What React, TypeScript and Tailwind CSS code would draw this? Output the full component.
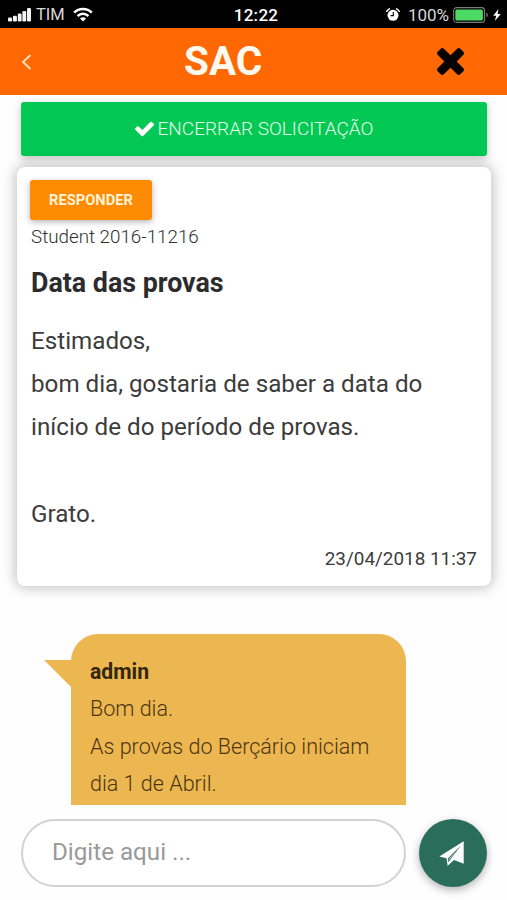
import type { ReactNode } from "react";

interface MessageLineProps {
  children?: ReactNode;
}

function SignalIcon() {
  return (
    <svg width="23" height="14" viewBox="0 0 23 14" fill="#f4f4f4">
      <rect x="0" y="9.5" width="4" height="4" rx="1.2" />
      <rect x="4.9" y="7.8" width="4" height="5.7" rx="1.2" />
      <rect x="9.8" y="5.5" width="3.8" height="8" rx="1.2" />
      <rect x="14.4" y="3" width="3.8" height="10.5" rx="1.2" />
      <rect x="19" y="0" width="4" height="13.5" rx="1.2" />
    </svg>
  );
}

function WifiIcon() {
  return (
    <svg width="20" height="15" viewBox="0 0 20 15" fill="none" stroke="#fff" strokeWidth="2.5">
      <path d="M1.2 5.6a12.4 12.4 0 0 1 17.6 0" />
      <path d="M4.6 9.1a7.6 7.6 0 0 1 10.8 0" />
      <path d="M10 14.4 7 11.4a4.2 4.2 0 0 1 6 0z" fill="#fff" stroke="none" />
    </svg>
  );
}

function AlarmIcon() {
  return (
    <svg width="14" height="14" viewBox="0 0 14 14">
      <circle cx="7" cy="7.3" r="5.5" fill="#fff" />
      <path d="M.7 3.3A8 8 0 0 1 3.4.8M10.6.8a8 8 0 0 1 2.7 2.5" fill="none" stroke="#fff" strokeWidth="1.5" strokeLinecap="round" />
      <path d="M7.3 4v3.6H4.6" fill="none" stroke="#000" strokeWidth="1.1" />
    </svg>
  );
}

function BatteryIcon() {
  return (
    <svg width="36" height="16" viewBox="0 0 36 16">
      <rect x=".6" y=".6" width="31" height="14.8" rx="3.2" fill="none" stroke="#7c7c7c" strokeWidth="1.1" />
      <rect x="2.3" y="2.4" width="27.6" height="11.2" rx="1.6" fill="#4cd964" />
      <path d="M33.4 5.6c1.9.8 1.9 4 0 4.8z" fill="#7c7c7c" />
    </svg>
  );
}

function StatusBar() {
  return (
    <div className="flex h-7 shrink-0 items-center bg-black pt-px text-[17px] leading-7 text-[#d8d8d8]">
      <div className="flex w-[170px] items-center pl-2">
        <SignalIcon />
        <span className="ml-[5px] text-[16.5px]">TIM</span>
        <span className="ml-2">
          <WifiIcon />
        </span>
      </div>
      <span className="flex-1 pl-[5px] text-center font-medium tracking-[0.3px] text-white">12:22</span>
      <div className="flex w-[170px] items-center justify-end pr-[6px]">
        <AlarmIcon />
        <span className="mr-1 ml-2">100%</span>
        <BatteryIcon />
        <svg className="ml-1" width="8" height="12" viewBox="0 0 8 12" fill="#fff">
          <path d="M5.5 0 .2 6.7h3L1.8 12 7.8 4.9H4.5z" />
        </svg>
      </div>
    </div>
  );
}

function Header() {
  return (
    <header className="flex h-[67px] shrink-0 items-center bg-[#ff6802] pr-[43px] pl-[21px]">
      <button className="w-[38px]" aria-label="Voltar">
        <svg width="11" height="16" viewBox="0 0 11 16" fill="none" stroke="#ffe3c0" strokeWidth="1.8">
          <path d="M9.5 1 2 8l7.5 7" />
        </svg>
      </button>
      <h1 className="ml-[125px] text-[40.5px] leading-[67px] font-bold text-[#fffaf0]">SAC</h1>
      <button className="ml-auto" aria-label="Fechar">
        <svg width="27" height="27" viewBox="302 366 1188 1188" fill="#080400">
          <path d="M1490 1322q0 40-28 68l-136 136q-28 28-68 28t-68-28l-294-294-294 294q-28 28-68 28t-68-28l-136-136q-28-28-28-68t28-68l294-294-294-294q-28-28-28-68t28-68l136-136q28-28 68-28t68 28l294 294 294-294q28-28 68-28t68 28l136 136q28 28 28 68t-28 68l-294 294 294 294q28 28 28 68z" />
        </svg>
      </button>
    </header>
  );
}

function MessageLine({ children }: MessageLineProps) {
  return <p className="h-[43.2px]">{children}</p>;
}

function RequestCard() {
  return (
    <section className="mx-4 mt-[11px] ml-[17px] h-[419px] shrink-0 rounded-lg bg-white px-3.5 pt-[13px] shadow-[0_0_13px_2px_rgba(0,0,0,0.24)]">
      <button className="-ml-px block h-10 w-[122px] rounded-[3px] bg-[#ff8a04] text-[14.7px] font-bold text-[#fff3d6] shadow-[0_2px_6px_rgba(0,0,0,0.3)]">
        RESPONDER
      </button>
      <p className="mt-1 text-[18.8px] leading-[26px] font-light text-[#303030]">Student 2016-11216</p>
      <h2 className="mt-[17px] text-[26.8px] leading-[33px] font-bold text-[#2c2c2c]">Data das provas</h2>
      <div className="mt-5 text-[24.2px] leading-[43.2px] text-[#3c3c3c]">
        <MessageLine>Estimados,</MessageLine>
        <MessageLine>bom dia, gostaria de saber a data do</MessageLine>
        <MessageLine>início de do período de provas.</MessageLine>
        <MessageLine />
        <MessageLine>Grato.</MessageLine>
      </div>
      <p className="mt-[11px] text-right text-[18.9px] leading-6 text-[#3c3c3c]">23/04/2018 11:37</p>
    </section>
  );
}

function ReplyBubble() {
  return (
    <section className="relative mt-12 ml-[71px] h-[171px] w-[335px] shrink-0 rounded-t-[27px] bg-[#ecb751] pt-[18.5px] pl-[19px] text-[21.55px] leading-[37.6px] font-light text-[#4e3512]">
      <svg className="absolute top-[26px] -left-[27px]" width="28" height="27" viewBox="0 0 28 27" fill="#ecb751">
        <path d="M0 0h28v27h-1z" />
      </svg>
      <p className="text-[21.2px] font-bold text-[#34270f]">admin</p>
      <p>Bom dia.</p>
      <p>As provas do Berçário iniciam</p>
      <p>dia 1 de Abril.</p>
    </section>
  );
}

function Composer() {
  return (
    <footer className="mt-[14px] ml-[21px] flex shrink-0 items-center gap-[13px]">
      <input
        className="h-[68px] w-[385px] rounded-full border-2 border-[#d2d2d2] bg-white pb-[3px] pl-[29px] text-[24.2px] text-[#444] placeholder:text-[#999]"
        placeholder="Digite aqui ..."
      />
      <button
        className="flex size-[68px] items-center justify-center rounded-full bg-[#2a6e59] shadow-[0_3px_8px_rgba(0,0,0,0.3)]"
        aria-label="Enviar"
      >
        <svg className="-ml-1" width="25" height="25" viewBox="0 0 25 25" fill="#fff">
          <path d="M24.7.2v22.6l-9.6-3.7-6.5 5.7-1-7.6L.3 15.6z" />
          <path d="M22 4.2 9 17.2l.5 4.3 2.6-3.7z" fill="#2a6e59" />
          <path d="M20 7.3 10.6 17.2l-.7 2.3z" fill="#d5e6df" />
        </svg>
      </button>
    </footer>
  );
}

export default function App() {
  return (
    <main className="flex h-[900px] w-[507px] flex-col overflow-hidden bg-[#fefefe] font-[Roboto,sans-serif]">
      <StatusBar />
      <Header />
      <button className="mt-[7px] ml-[21px] flex h-[54px] w-[466px] shrink-0 items-center justify-center gap-1 rounded-[3px] bg-[#03c853] text-[19px] font-light text-[#e4ffea] shadow-[0_3px_8px_rgba(0,0,0,0.22)]">
        <svg width="19" height="16" viewBox="121 334 1550 1188" fill="#fff">
          <path d="M1671 566q0 40-28 68l-724 724-136 136q-28 28-68 28t-68-28l-136-136-362-362q-28-28-28-68t28-68l136-136q28-28 68-28t68 28l294 295 656-657q28-28 68-28t68 28l136 136q28 28 28 68z" />
        </svg>
        ENCERRAR SOLICITAÇÃO
      </button>
      <RequestCard />
      <ReplyBubble />
      <Composer />
    </main>
  );
}
